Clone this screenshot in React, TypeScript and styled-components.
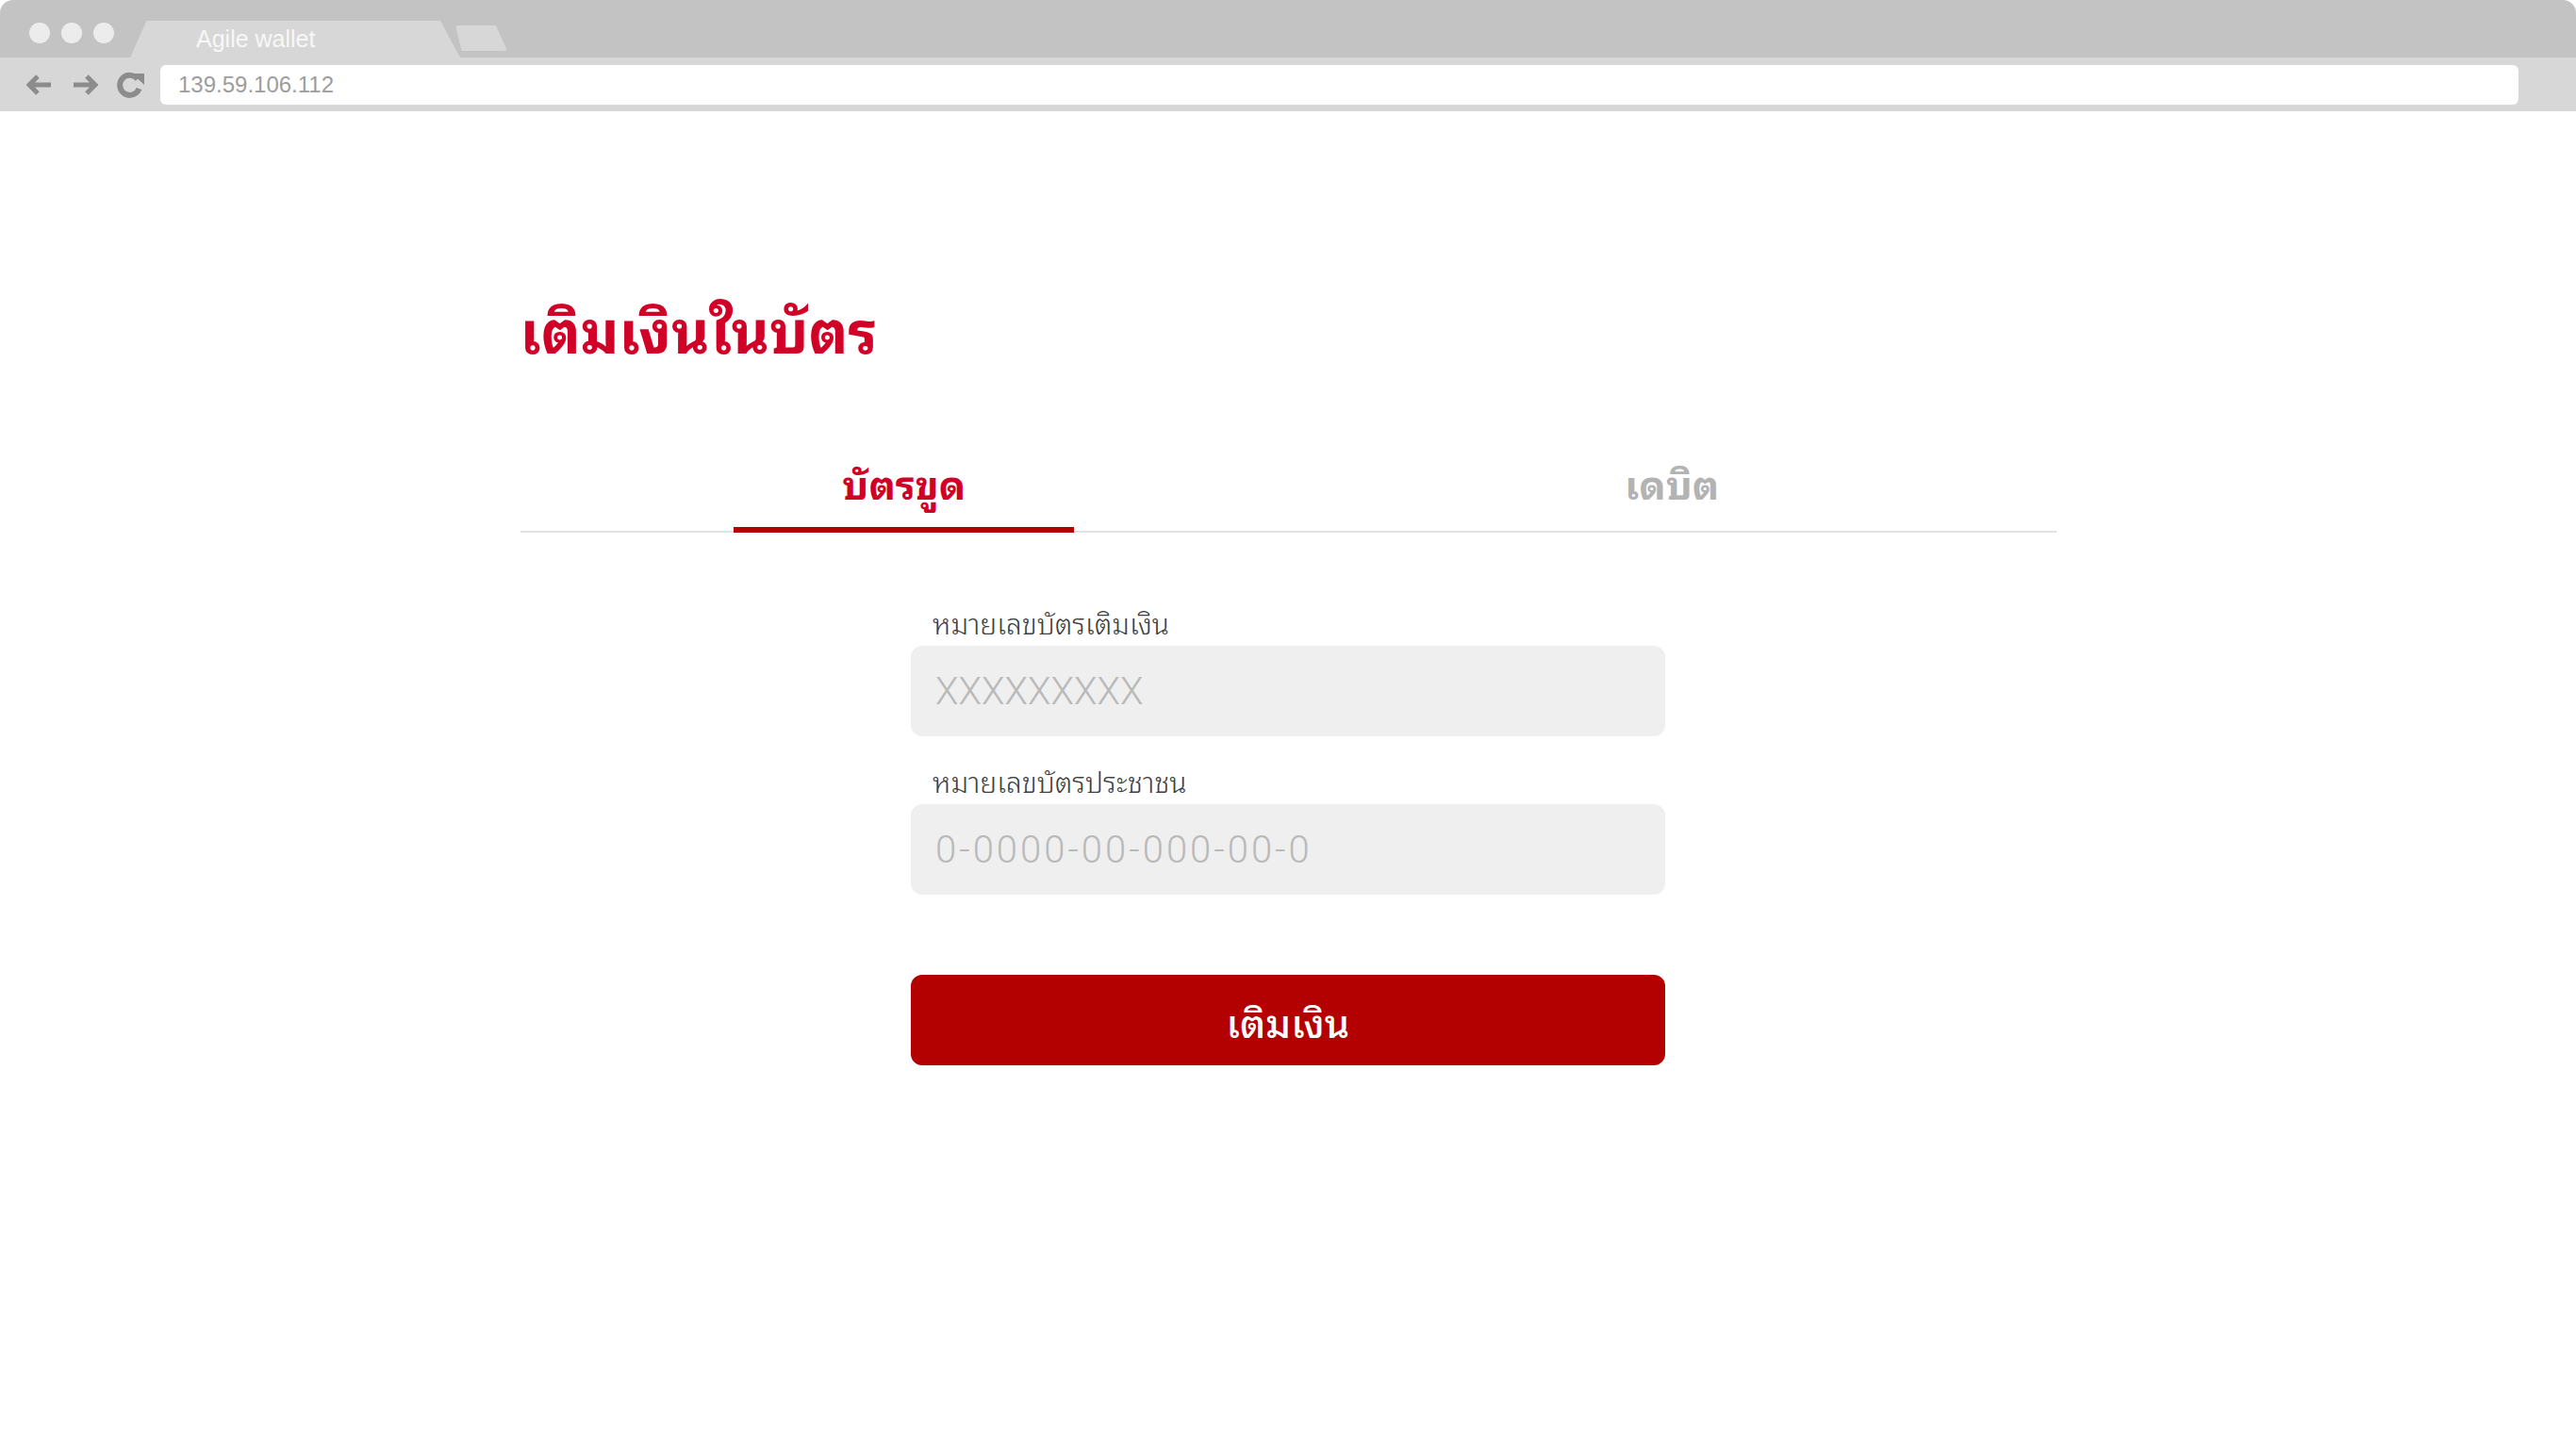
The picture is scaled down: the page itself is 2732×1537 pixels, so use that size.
import React from "react";
import styled, { createGlobalStyle } from "styled-components";

const GlobalStyle = createGlobalStyle`
  html, body { margin: 0; padding: 0; background: #ffffff; }
  body { font-family: "Noto Sans Thai Looped", "Noto Sans Thai", "Loma", "Garuda", "Noto Sans", sans-serif; }
  * { box-sizing: border-box; }
`;

const THAI = `"Noto Sans Thai Looped", "Noto Sans Thai", "Loma", "Garuda", "Noto Sans", sans-serif`;

const Window = styled.div`
  width: 2732px;
  min-height: 1537px;
  background: #ffffff;
`;

const TitleBar = styled.div`
  height: 61px;
  background: #c3c3c3;
  border-radius: 14px 14px 0 0;
  display: flex;
  align-items: flex-end;
  padding-left: 31px;
`;

const Dots = styled.div`
  display: flex;
  gap: 12px;
  align-self: center;
  margin-top: 8px;
`;

const Dot = styled.span`
  width: 22px;
  height: 22px;
  border-radius: 50%;
  background: #ececec;
`;

const Tab = styled.div`
  width: 350px;
  height: 39px;
  margin-left: 17px;
  background: #d8d7d8;
  clip-path: polygon(0 100%, 5% 0, 94% 0, 100% 100%);
  border-radius: 8px 8px 0 0;
  display: flex;
  align-items: center;
  padding-left: 70px;
  font-family: "Liberation Sans", Arial, sans-serif;
  font-size: 25px;
  color: #f7f7f7;
`;

const NewTab = styled.div`
  width: 55px;
  height: 27px;
  margin-left: -5px;
  margin-bottom: 7px;
  background: #d8d7d8;
  clip-path: polygon(0 0, 78% 0, 100% 100%, 12% 100%);
  border-radius: 3px;
`;

const AddressRow = styled.div`
  height: 57px;
  background: #d8d7d8;
  display: flex;
  align-items: center;
  padding: 0 61px 0 28px;
`;

const NavIcons = styled.div`
  display: flex;
  align-items: center;
  gap: 20px;
  margin-right: 16px;
`;

const AddressBox = styled.div`
  flex: 1;
  height: 42px;
  background: #ffffff;
  border-radius: 6px;
  display: flex;
  align-items: center;
  padding-left: 19px;
  font-family: "Liberation Sans", Arial, sans-serif;
  font-size: 24px;
  color: #9d9d9d;
`;

const Content = styled.main`
  width: 1629px;
  margin: 0 auto;
  padding-top: 189px;
`;

const Title = styled.h1`
  margin: 0;
  font-family: ${THAI};
  font-weight: 700;
  font-size: 62px;
  line-height: 80px;
  color: #d10026;
`;

const Tabs = styled.div`
  margin-top: 94px;
  display: grid;
  grid-template-columns: 1fr 1fr;
  border-bottom: 2px solid #e2e2e2;
`;

const TabItem = styled.div`
  display: flex;
  justify-content: center;
`;

const TabLabel = styled.div<{ $active?: boolean }>`
  width: 361px;
  text-align: center;
  font-family: ${THAI};
  font-weight: 700;
  font-size: 42px;
  line-height: 60px;
  padding-bottom: 18px;
  color: ${(p) => (p.$active ? "#d10026" : "#b3b3b3")};
  border-bottom: 6px solid ${(p) => (p.$active ? "#b30000" : "transparent")};
  margin-bottom: -2px;
`;

const Form = styled.form`
  width: 800px;
  margin: 74px auto 0;
  display: flex;
  flex-direction: column;
`;

const Field = styled.label`
  display: flex;
  flex-direction: column;
  margin-bottom: 26px;
`;

const FieldLabel = styled.span`
  padding-left: 23px;
  font-family: ${THAI};
  font-size: 30px;
  font-weight: 300;
  line-height: 42px;
  color: #3f3f3f;
  margin-bottom: 4px;
`;

const Input = styled.input<{ $spacing?: number }>`
  height: 96px;
  border: none;
  outline: none;
  border-radius: 12px;
  background: #efefef;
  padding: 0 26px;
  font-family: "Roboto", ${THAI};
  font-weight: 300;
  font-size: 40px;
  letter-spacing: ${(p) => p.$spacing ?? 0}px;
  color: #333;
  &::placeholder { color: #b9b9b9; }
`;

const Submit = styled.button`
  margin-top: 59px;
  height: 96px;
  border: none;
  border-radius: 12px;
  background: #b30000;
  color: #ffffff;
  font-family: ${THAI};
  font-size: 42px;
  font-weight: 500;
  cursor: pointer;
`;

const ArrowIcon = ({ dir }: { dir: "left" | "right" }) => (
  <svg width="28" height="24" viewBox="0 0 28 24" style={{ transform: dir === "right" ? "scaleX(-1)" : undefined }}>
    <path d="M12 3 L3 12 L12 21 M3 12 H26" fill="none" stroke="#8c8c8c" strokeWidth="5" strokeLinejoin="miter" />
  </svg>
);

const ReloadIcon = () => (
  <svg width="30" height="28" viewBox="0 0 30 28">
    <path d="M22 8 A10.5 10.5 0 1 0 23.5 18" fill="none" stroke="#8c8c8c" strokeWidth="6" />
    <path d="M16 2 H29 V14 Z" fill="#8c8c8c" />
  </svg>
);

export default function App() {
  return (
    <>
      <GlobalStyle />
      <Window>
        <TitleBar>
          <Dots>
            <Dot />
            <Dot />
            <Dot />
          </Dots>
          <Tab>Agile wallet</Tab>
          <NewTab />
        </TitleBar>
        <AddressRow>
          <NavIcons>
            <ArrowIcon dir="left" />
            <ArrowIcon dir="right" />
            <ReloadIcon />
          </NavIcons>
          <AddressBox>139.59.106.112</AddressBox>
        </AddressRow>
        <Content>
          <Title>เติมเงินในบัตร</Title>
          <Tabs>
            <TabItem>
              <TabLabel $active>บัตรขูด</TabLabel>
            </TabItem>
            <TabItem>
              <TabLabel>เดบิต</TabLabel>
            </TabItem>
          </Tabs>
          <Form onSubmit={(e) => e.preventDefault()}>
            <Field>
              <FieldLabel>หมายเลขบัตรเติมเงิน</FieldLabel>
              <Input placeholder="XXXXXXXXX" />
            </Field>
            <Field>
              <FieldLabel>หมายเลขบัตรประชาชน</FieldLabel>
              <Input placeholder="0-0000-00-000-00-0" $spacing={3} />
            </Field>
            <Submit type="submit">เติมเงิน</Submit>
          </Form>
        </Content>
      </Window>
    </>
  );
}
